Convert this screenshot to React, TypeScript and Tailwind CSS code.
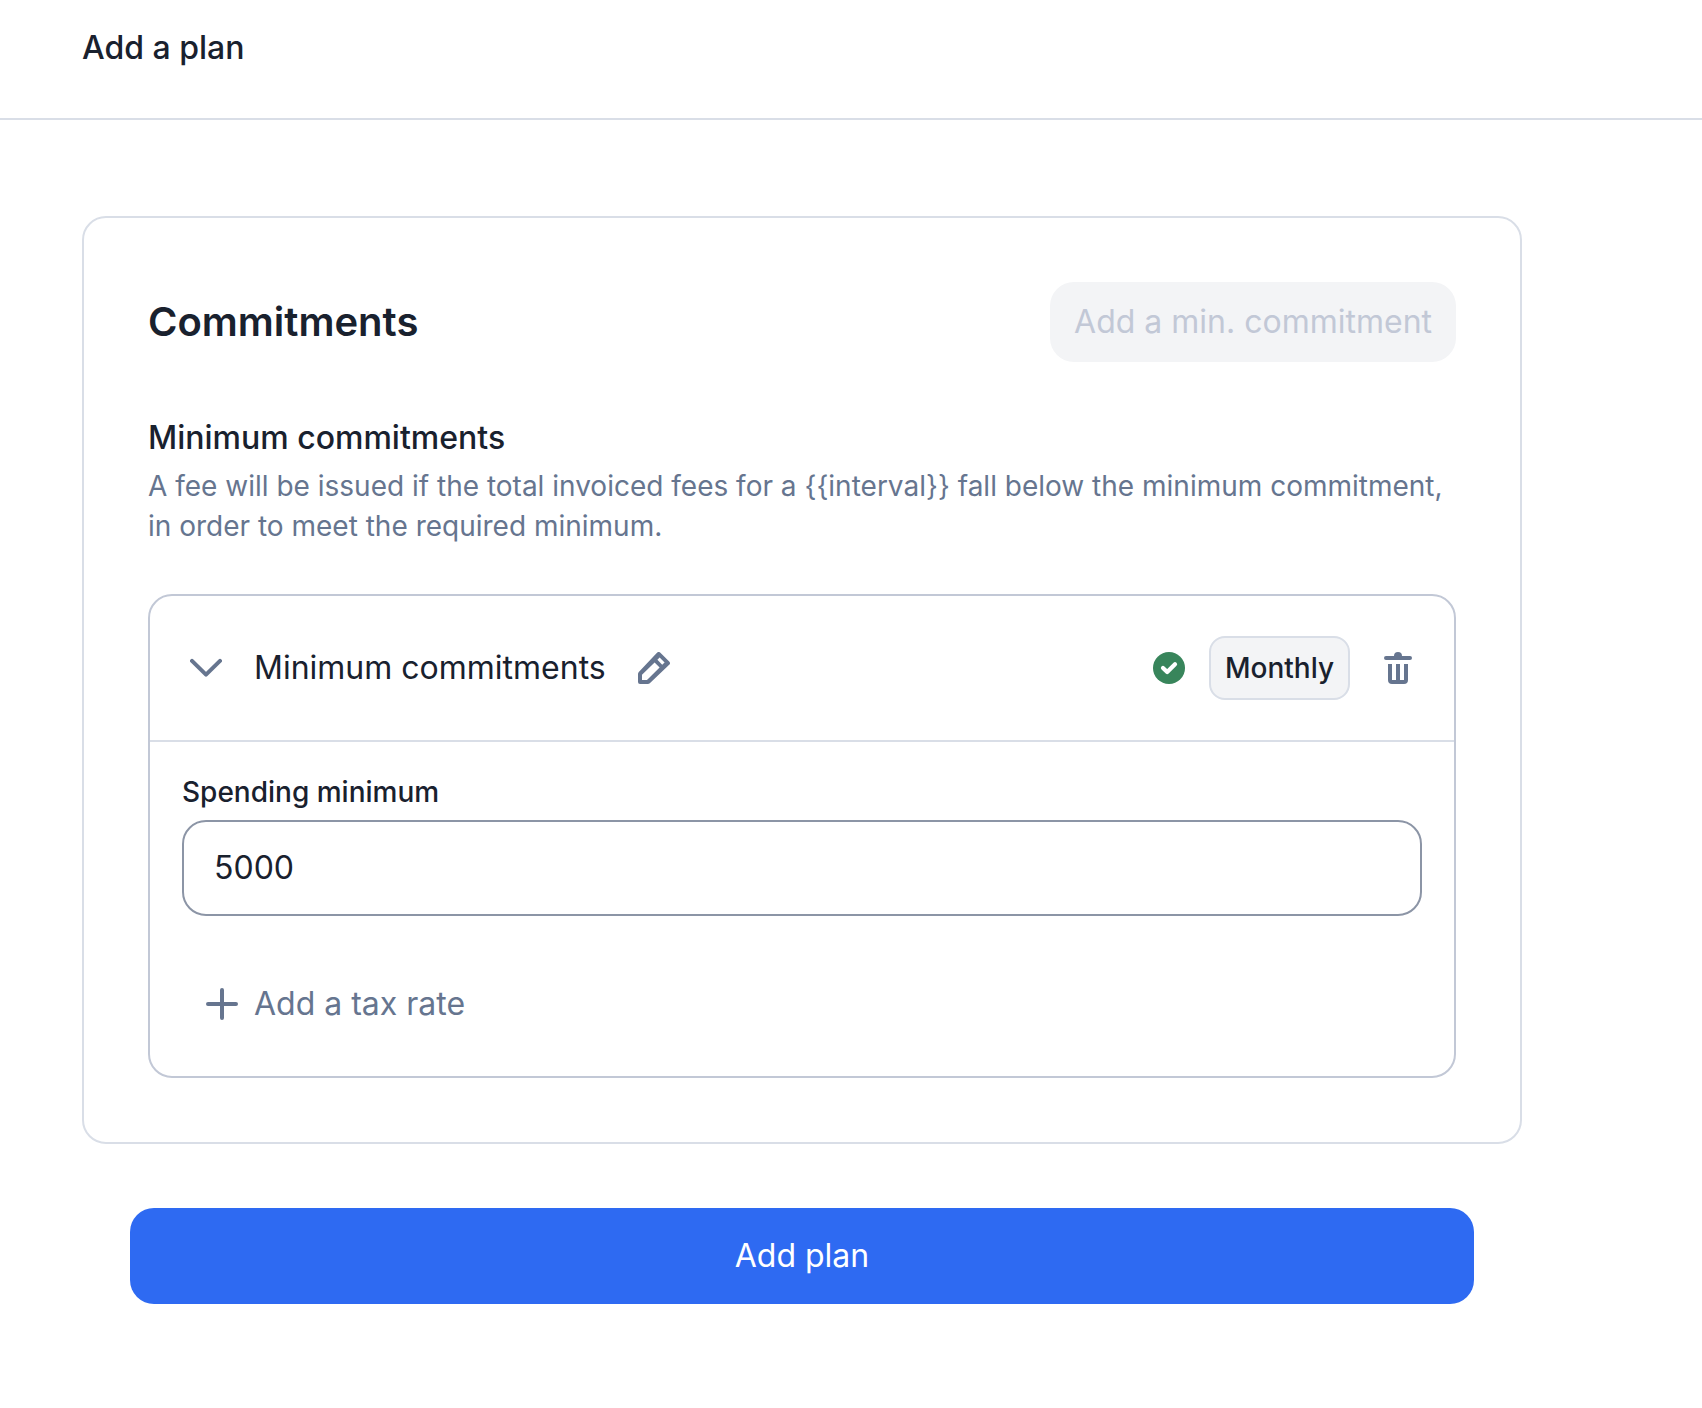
import { useState } from "react";

function ChevronIcon() {
  return (
    <svg viewBox="0 0 16 16" className="size-8" fill="none" stroke="currentColor" strokeWidth="2" strokeLinecap="round" strokeLinejoin="round" aria-hidden="true">
      <path d="M1 4.4 8 11.3l7-6.9" />
    </svg>
  );
}

function PencilIcon() {
  return (
    <svg viewBox="0 0 16 16" className="size-8" fill="currentColor" aria-hidden="true">
      <path
        fillRule="evenodd"
        d="M9.5.4a1.2 1.2 0 0 1 1.7 0l4.4 4.3a1.2 1.2 0 0 1 0 1.7L5.9 15.6a1.4 1.4 0 0 1-1 .4H1a1 1 0 0 1-1-1v-4a1.4 1.4 0 0 1 .4-1ZM2 14h2.5l6.3-6.3-2.5-2.5L2 11.4Zm7.7-10.1 2.4 2.5 1.2-1.1-2.5-2.5Z"
      />
    </svg>
  );
}

function CheckIcon() {
  return (
    <svg viewBox="0 0 16 16" className="size-8" fill="none" role="img" aria-label="Complete">
      <circle cx="8" cy="8" r="8" fill="#38855b" />
      <path d="m5 8 2.1 2L11 6.1" stroke="#fff" strokeWidth="2.1" strokeLinecap="round" strokeLinejoin="round" />
    </svg>
  );
}

function TrashIcon() {
  return (
    <svg viewBox="0 0 16 16" className="size-8" fill="currentColor" aria-hidden="true">
      <path d="M6 2a2 2 0 0 1 4 0h4a1 1 0 1 1 0 2H2a1 1 0 0 1 0-2Z" />
      <path fillRule="evenodd" d="M3 6h2v8h2V6h2v8h2V6h2v8a2 2 0 0 1-2 2H5a2 2 0 0 1-2-2Z" />
    </svg>
  );
}

function PlusIcon() {
  return (
    <svg viewBox="0 0 16 16" className="size-8" fill="none" stroke="currentColor" strokeWidth="2" strokeLinecap="round" aria-hidden="true">
      <path d="M8 1v14M1 8h14" />
    </svg>
  );
}

export default function App() {
  const [amount, setAmount] = useState("5000");

  return (
    <div className="min-h-screen bg-white font-['Inter',sans-serif] text-[#19212e]">
      <header className="border-b-2 border-[#d9dee7] px-[82px] pt-6 pb-[46px]">
        <h1 className="text-[32px] leading-12 font-medium">Add a plan</h1>
      </header>
      <main className="mr-[180px] ml-[82px] py-24">
        <section className="rounded-3xl border-2 border-[#d9dee7] p-16">
          <div className="flex items-center justify-between">
            <h2 className="text-[40px] leading-12 font-semibold">Commitments</h2>
            <button type="button" disabled className="rounded-3xl bg-[#f3f4f6] px-6 py-4 text-[32px] leading-12 text-[#c2c8d6]">
              Add a min. commitment
            </button>
          </div>
          <h3 className="mt-12 text-[32px] leading-14 font-medium">Minimum commitments</h3>
          <p className="text-[28px] leading-10 text-[#66758f]">
            {"A fee will be issued if the total invoiced fees for a {{interval}} fall below the minimum commitment, in order to meet the required minimum."}
          </p>
          <div className="mt-12 rounded-3xl border-2 border-[#c2c8d6]">
            <div className="flex items-center justify-between border-b-2 border-[#d9dee7] px-10 py-10">
              <div className="flex items-center gap-8">
                <button type="button" aria-label="Collapse" className="text-[#66758f]">
                  <ChevronIcon />
                </button>
                <span className="text-[32px] leading-12">Minimum commitments</span>
                <button type="button" aria-label="Edit name" className="text-[#66758f]">
                  <PencilIcon />
                </button>
              </div>
              <div className="flex items-center">
                <CheckIcon />
                <span className="ml-6 rounded-2xl border-2 border-[#d9dee7] bg-[#f3f4f6] px-[14px] py-[10px] text-[28px] leading-10 font-medium">
                  Monthly
                </span>
                <button type="button" aria-label="Delete" className="ml-8 text-[#66758f]">
                  <TrashIcon />
                </button>
              </div>
            </div>
            <div className="px-8 pt-[30px] pb-8">
              <label htmlFor="spending-minimum" className="mb-2 block text-[28px] leading-10 font-medium">
                Spending minimum
              </label>
              <input
                id="spending-minimum"
                type="text"
                inputMode="decimal"
                value={amount}
                onChange={(event) => setAmount(event.target.value)}
                className="block w-full rounded-3xl border-2 border-[#8c95a6] bg-white px-[30px] py-[22px] text-[32px] leading-12"
              />
              <button type="button" className="mt-12 flex items-center gap-4 rounded-3xl px-6 py-4 text-[32px] leading-12 text-[#66758f]">
                <PlusIcon />
                Add a tax rate
              </button>
            </div>
          </div>
        </section>
        <div className="mt-16 px-12">
          <button type="button" className="w-full rounded-3xl bg-[#2e6af2] px-6 py-6 text-[32px] leading-12 text-white">
            Add plan
          </button>
        </div>
      </main>
    </div>
  );
}
